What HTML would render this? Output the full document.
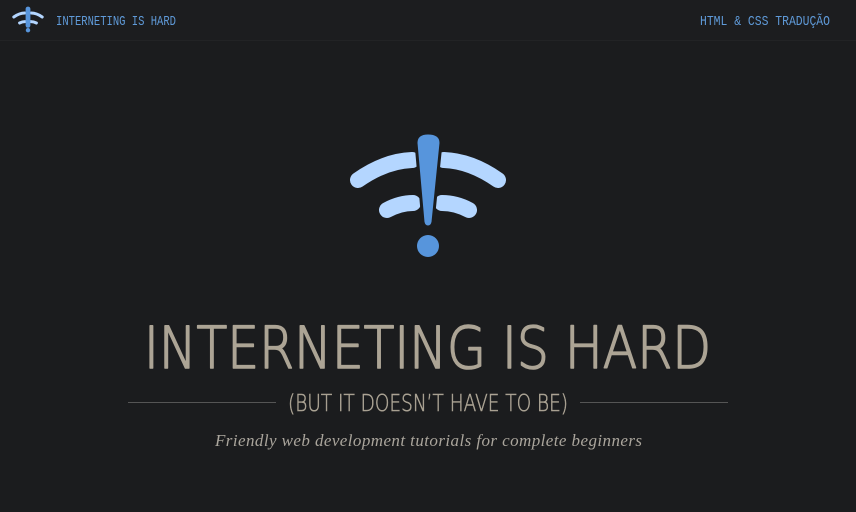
<!DOCTYPE html>
<html><head><meta charset="utf-8"><style>
html,body{margin:0;padding:0;background:#1b1c1e;width:856px;height:512px;overflow:hidden}
svg{display:block}
</style></head><body>
<svg width="856" height="512" viewBox="0 0 856 512" xmlns="http://www.w3.org/2000/svg">
<rect width="856" height="512" fill="#1b1c1e"/>
<rect width="856" height="40" fill="#1c1d1f"/>
<line x1="0" y1="40.5" x2="856" y2="40.5" stroke="#222325"/>
<!-- small logo -->
<g transform="translate(28,19) scale(0.2) translate(-428,-190)" fill="none" stroke-linecap="round">
<path d="M357 180 Q385 160 412 160" stroke="#b4d6ff" stroke-width="15"/>
<path d="M499 180 Q471 160 444 160" stroke="#b4d6ff" stroke-width="15"/>
<path d="M386 210 Q400 203 413 203" stroke="#b4d6ff" stroke-width="15"/>
<path d="M470 210 Q456 203 442 203" stroke="#b4d6ff" stroke-width="15"/>
<path d="M428 140 L428 222" stroke="#5795dc" stroke-width="24"/>
<circle cx="428" cy="246" r="11" fill="#5795dc" stroke="none"/>
</g>
<text x="56" y="25" font-family="Liberation Mono, monospace" font-size="14" fill="#5f9ad8" textLength="120" lengthAdjust="spacingAndGlyphs">INTERNETING IS HARD</text>
<text x="700" y="25" font-family="Liberation Mono, monospace" font-size="14" fill="#5f9ad8" textLength="130" lengthAdjust="spacingAndGlyphs">HTML &amp; CSS TRADUÇÃO</text>
<!-- big logo -->
<g fill="none" stroke-linecap="round">
<path d="M358 180 Q385 161 412 160" stroke="#b4d6ff" stroke-width="16"/>
<path d="M498 180 Q471 161 444 160" stroke="#b4d6ff" stroke-width="16"/>
<path d="M387 210 Q400 203 413 203" stroke="#b4d6ff" stroke-width="16"/>
<path d="M469 210 Q456 203 442 203" stroke="#b4d6ff" stroke-width="16"/>
</g>
<path d="M416 143 Q416 133 428 133 Q441 133 441 143 L433 222 Q432 227 428 227 Q424 227 423 222 Z" fill="#5795dc" stroke="#1b1c1e" stroke-width="3"/>
<circle cx="428" cy="246" r="11" fill="#5795dc"/>
<text x="144" y="368" font-family="DejaVu Sans, Liberation Sans, sans-serif" font-weight="200" font-size="58" fill="#aca495" stroke="#aca495" stroke-width="1.6" stroke-linejoin="round" textLength="567" lengthAdjust="spacingAndGlyphs">INTERNETING IS HARD</text>
<line x1="128" y1="402.5" x2="276" y2="402.5" stroke="#555"/>
<line x1="580" y1="402.5" x2="728" y2="402.5" stroke="#555"/>
<text x="288" y="411" font-family="DejaVu Sans, Liberation Sans, sans-serif" font-weight="200" font-size="23" fill="#aca495" stroke="#aca495" stroke-width="0.5" textLength="280" lengthAdjust="spacingAndGlyphs">(BUT IT DOESN’T HAVE TO BE)</text>
<text x="215" y="446" font-family="Liberation Serif, serif" font-style="italic" font-size="17" fill="#aaa59c" textLength="427" lengthAdjust="spacing">Friendly web development tutorials for complete beginners</text>
</svg>
</body></html>
